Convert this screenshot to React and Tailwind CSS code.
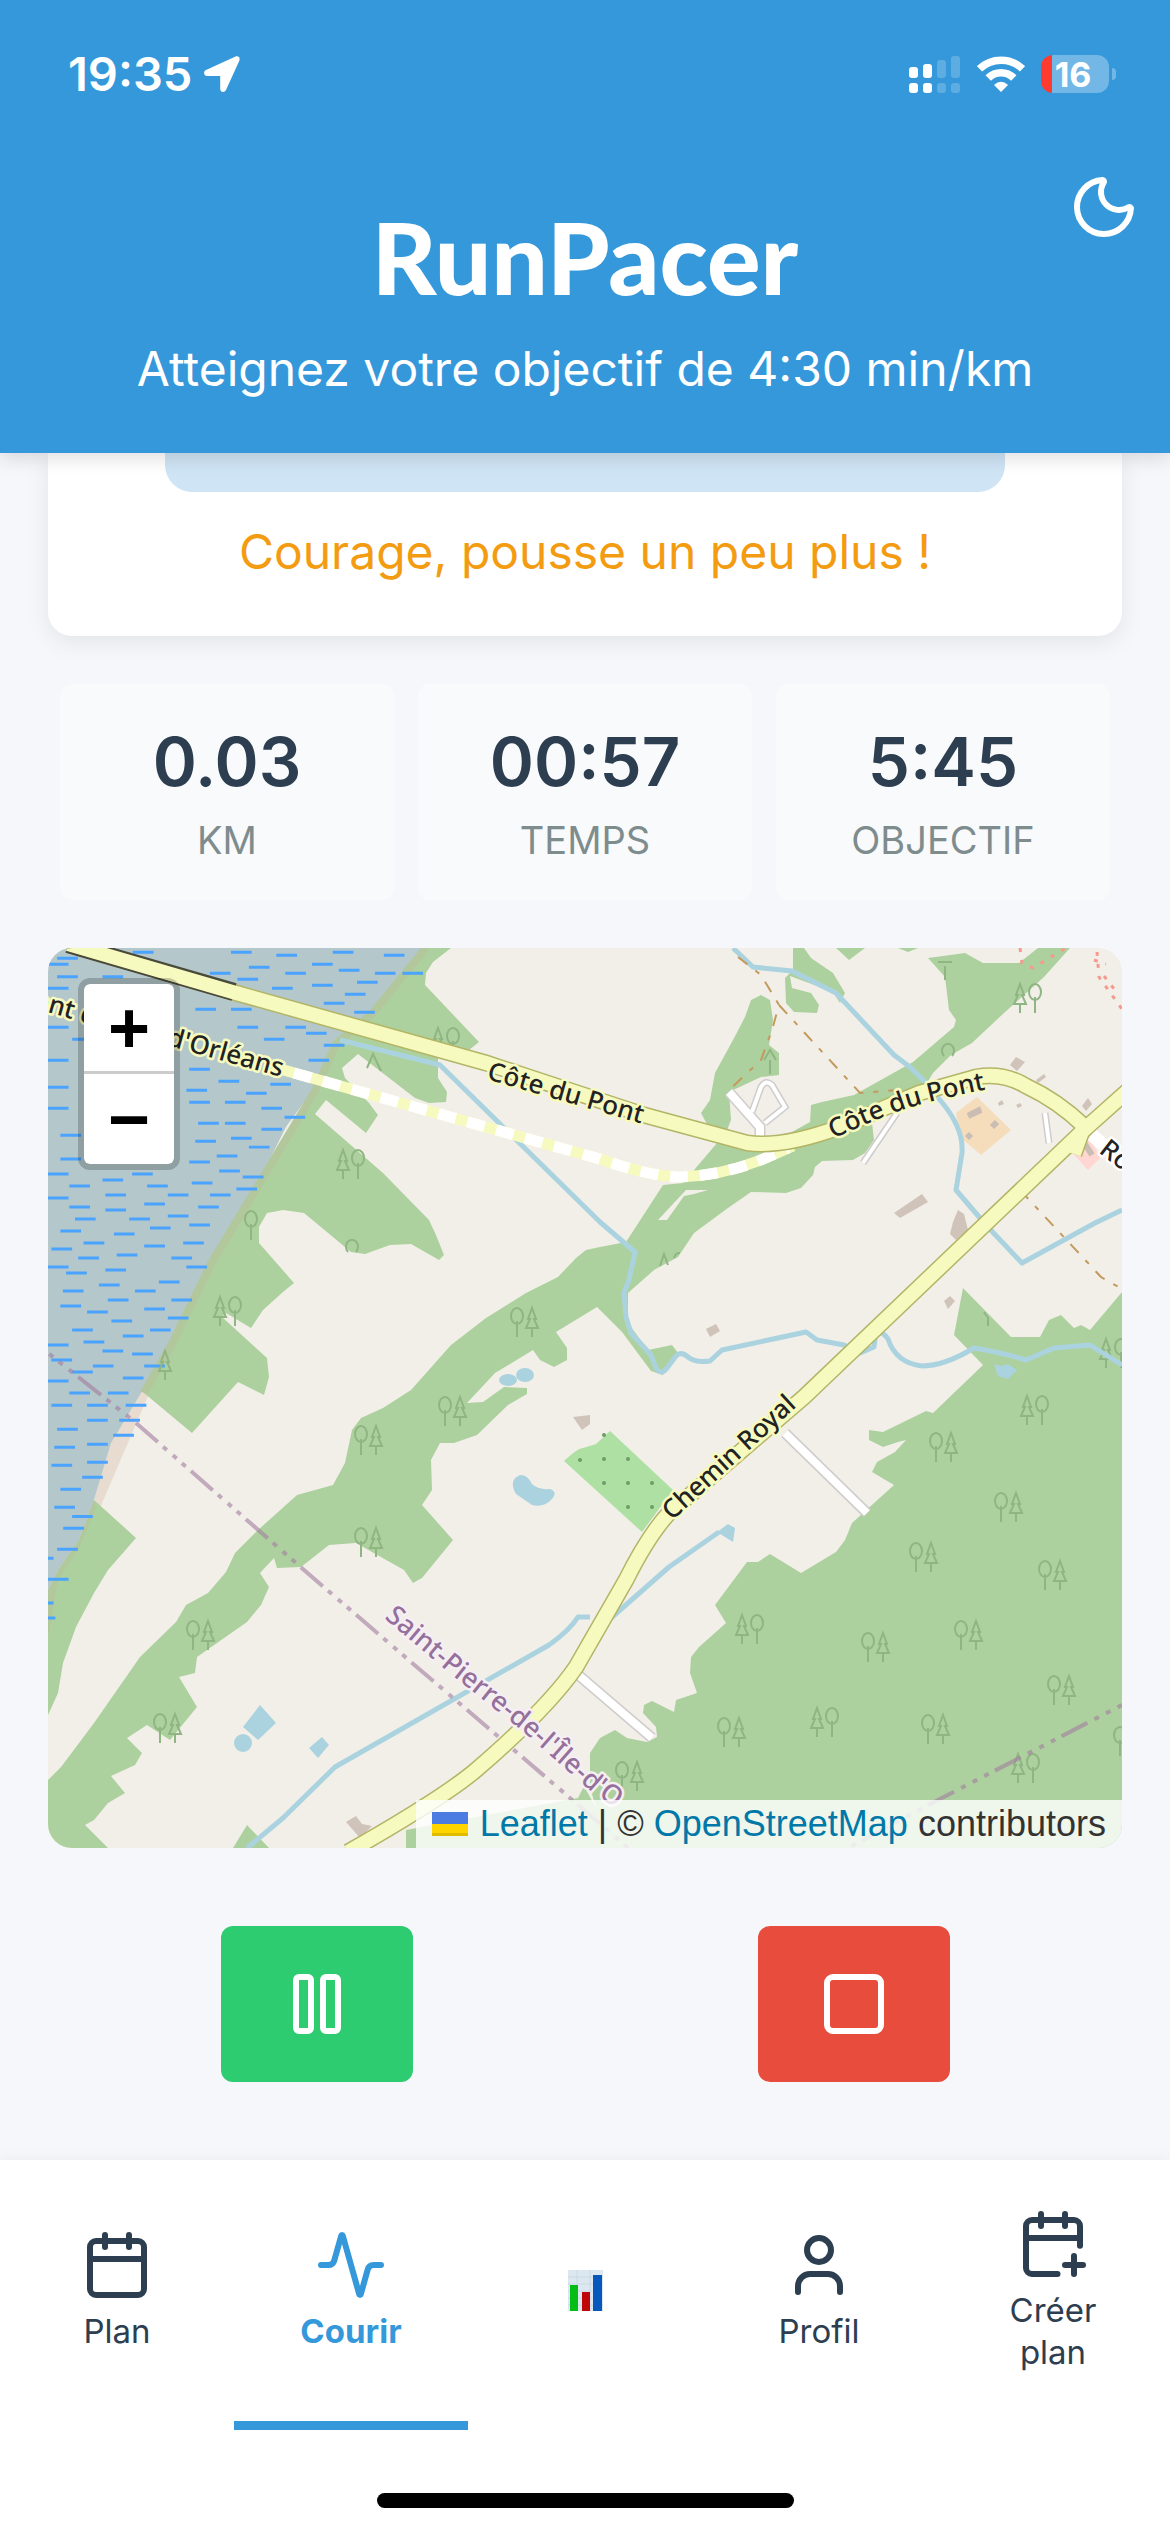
import React from "react";
import { Activity, Calendar, CalendarPlus, Moon, Pause, Square, User } from "lucide-react";

const FOREST = [
  "M378 0H403L385 14L378 25L377 37L431 94L421 102L390 108L390 130L399 144L398 154L381 155L367 150L310 106L294 120L297 130L321 155L330 167L318 185L278 152L267 166L335 225L381 272L388 287L396 307L391 312L363 296L342 297L317 306L303 304L256 265L235 262L219 265L211 279V295L246 335L235 344L215 362L203 380L178 365L174 369L219 410L221 429L216 447L190 434L144 485L90 440L124 392L163 312L213 229L267 139L288 92L324 64Z",
  "M46 552L88 590L60 622L46 645L28 679L15 715L10 745L0 767V642L10 622L31 592Z",
  "M552 299L578 294L615 237L635 235L669 195L653 165L662 152L667 125L685 92L697 69L703 52L713 47L722 52L725 72L721 97L731 105V127L713 129L681 144L683 172L676 190L735 189L762 174L763 157L774 154L806 147L865 114L906 79L908 72L901 62L897 29L880 10L917 5L935 15H971L990 0H1022L996 29L956 65L924 95L903 107L885 125L870 150L824 175L826 192L817 205L805 212L774 213L767 219L765 227L753 240L738 245L703 244L680 260L646 285L630 309L606 322L580 345L580 375L600 402L624 397L630 405L615 427L603 423L574 384L549 359L508 384L519 400V412L506 419L492 412L485 402L447 425L419 455L435 454L456 439L479 440V446L460 457L429 487L406 495H392L383 512L384 542L374 557L405 592L374 630L365 635L356 622L308 595L281 597L253 619L229 620L226 610L212 625L221 639L213 657L199 674L149 709L147 725L131 729L149 759L122 792L99 777L79 790L94 805L87 817L63 828L77 845L60 855L46 872L37 877L60 900H0V832L13 819L46 775L92 709L128 674L138 657L160 645L178 624L187 605L210 582L249 547L285 537L297 515L304 482L313 470L335 460L363 442L403 397L438 370L478 345L510 329L528 310L538 302Z",
  "M745 0H756L763 10L785 25L797 45L792 55L785 44L742 28L744 40L763 45L771 57L769 65L746 64L738 55L737 30L745 22Z",
  "M788 0L801 12L817 0Z",
  "M850 0L860 4L870 0Z",
  "M915 340L963 389H992L1001 372L1013 367L1026 380L1033 377L1042 382L1074 344V900H358V882L530 850L536 838L548 860L542 839V805L552 790L567 782L579 790L599 794L609 789L608 779L595 765L596 757L604 753L626 764L628 752L649 745L642 725L643 709L651 699L678 675L667 657L699 614L710 614L722 606L753 625L788 604L797 592L804 575L846 537L824 524L829 514L847 504L858 492L850 494L835 499L821 492V482L835 484L878 463L885 465L935 417L906 387Z",
  "M199 877L221 900H185Z",
];

const SEA =
  "M0 0H378L324 64L288 92L267 139L238 179L213 229L196 259L163 312L146 345L124 392L90 450L63 495L46 552L31 592L10 622L0 642Z";

const SHORE = "M378 0L324 66L288 96L267 143L213 233L163 316L124 396L96 445";

const STREAMS = [
  "M292 92L392 117L552 274L587 304L581 332L576 345L578 369L583 385L603 407L608 420Q613 428 619 420L628 408Q633 403 640 409T662 413L674 402L758 384L769 392L796 397L812 405L826 399L828 384Q836 384 840 391Q848 415 874 418Q896 418 926 400Q956 405 978 412L1006 400L1042 397L1074 417",
  "M685 0L705 19L744 23L788 45L846 107L862 119L878 135L892 152Q916 180 914 205L908 242L938 277L974 315L1047 275L1074 262",
  "M671 584L621 619L563 670M542 669H530Q522 682 501 697L287 819L235 870L199 900",
];

const MAIN_ROADS = [
  "M20 -4L188 45L438 115L596 167L699 195Q735 200 792 179L871 145L928 129Q955 124 978 138Q1010 153 1036 178L1026 206",
  "M1084 139L1038 180L756 449L621 565Q600 588 578 632L528 719Q500 760 428 822Q395 850 300 904",
];

const WHITE_ROADS = ["M737 485L819 565", "M528 725L604 790", "M681 144L712 179V193", "M704 164L713 139Q718 131 724 137L737 159L717 175", "M849 165L815 215", "M997 165L1001 195"];

const BUILDINGS = [
  "M846 265L874 246L880 254L852 270Z",
  "M905 274L910 262L916 266L920 282L908 292L902 286Z",
  "M896 353L902 348L907 353L900 361Z",
  "M658 381L668 376L672 383L662 389Z",
  "M962 117L968 109L977 114L969 123Z",
  "M988 132L996 126L998 129L990 135Z",
  "M919 165L932 158L934 163L922 169Z",
  "M1034 158L1040 150L1044 156L1038 163Z",
  "M525 469L542 467L542 476L534 482Z",
  "M298 874L308 868L314 876L324 878L312 890Z",
  "M950 155L954 152L956 156L951 158Z",
  "M968 157L972 155L974 158L970 160Z",
];

const ROUND_FIRST = [[881,484],[946,544],[861,594],[990,612],[813,684],[906,672],[999,727],[669,769],[873,766],[567,813],[390,448],[306,477],[306,579],[138,672],[105,765],[462,359],[1065,778]];
const CONE_FIRST = [[972,447],[687,666],[762,759],[963,805],[383,79],[288,201],[165,348],[965,35],[1051,390]];

// Open-water hatch marks on the map's raster grid, as [column, row] pairs.
const WAVES_NORTH = [
  [260,37],[535,37],[820,37],[662,46],[963,46],[48,55],[22,73],[762,73],[585,82],[837,91],[476,100],[938,100],[1015,100],[48,110],[175,110],[687,100],[553,118],[762,136],[888,127],[650,145],[854,163],[795,190],[880,217],[435,208],[535,208],[22,145],[22,262],[90,298],[553,262],[687,262],[627,298],[745,280],[795,316],[22,361],[752,361],[418,388],[500,424],[645,433],[22,442],[577,460],[410,451],[418,487],[518,487],[620,505],[22,505],[685,532],[443,550],[518,550],[620,568],[57,586],[435,604],[535,595],[585,622],[57,658],[495,649],[418,667],[502,694],[568,712],[22,703],[175,721],[258,703],[82,739],[300,739],[425,730],[550,748],[183,766],[358,766],[476,766],[22,775],[82,802],[292,793],[443,802],[183,811],[98,838],[250,838],[358,829],[57,874],[308,865],[418,856],[207,883],[122,910],[292,919],[401,910],[32,928],[215,946],[107,955],[368,955],[22,982],[183,991],[410,982],[73,1000],[333,1027],[165,1036],[64,1054],[266,1054],[190,1081],[368,1081],[57,1099],[292,1108],[132,1117],[358,1135],[200,1144],[308,1171],[90,1171],[232,1189],[122,1207],[22,1216],[175,1234],[258,1243],[32,1261],[148,1279],[292,1279],[90,1297],[232,1315],[22,1324],[82,1360],[190,1360],
];
const WAVES_SOUTH = [[32,46],[132,46],[240,46],[132,91],[222,91],[48,118],[205,136],[132,163],[40,172],[132,217],[32,226],[118,262],[57,298],[40,352],[90,380],[65,415],[48,478],[-20,505],[22,568],[-20,640],[-15,685]];

const toDashes = (marks) => marks.map(([x, y]) => `M${x} ${y}h58`).join("");

function RoundTree({ x }) {
  return <path d={`M${x + 7} 14v16M${x + 7} 1a6 8 0 0 1 0 16a6 8 0 0 1 0-16z`} />;
}

function ConeTree({ x }) {
  return <path d={`M${x + 7} 21v9M${x + 7} 1l4 11h-2l4 9h-12l4-9h-2z`} />;
}

function MapLabel({ fill = "#222", halo = "#f7fabf", children, ...rest }) {
  return (
    <text fontFamily='"Noto Sans", sans-serif' fontSize="26" fontWeight="500" fill={fill} stroke={halo} strokeWidth="5" strokeLinejoin="round" paintOrder="stroke" {...rest}>
      {children}
    </text>
  );
}

function MapCanvas() {
  return (
    <svg viewBox="0 0 1074 900" preserveAspectRatio="xMidYMid slice" className="block h-full w-full" role="img" aria-label="Carte du parcours">
      <defs>
        <path id="cote-est" d="M785 191Q840 165 874 156T960 137" />
        <path id="saint-pierre" d="M336 670L400 724L472 781L538 839L610 892" />
      </defs>
      <rect width="1074" height="900" fill="#f2efe9" />
      <path d="M90 440L100 448L52 560L46 552L63 495Z" fill="#e8dbd0" />
      <g fill="#add19e">
        {FOREST.map((d) => <path key={d} d={d} />)}
      </g>
      <path d="M638 242H660L646 246L636 248L619 272H610Z" fill="#f2efe9" />
      <path d={SEA} fill="#b4c7cb" />
      <path d={SHORE} fill="none" stroke="#b3c79d" strokeWidth="8" />
      <path d="M48 560L31 600L10 632L0 690V642L10 622L31 592L46 552Z" fill="#b3c79d" />
      <g fill="none" stroke="#4aa3ff" strokeWidth="9">
        <path d={toDashes(WAVES_NORTH)} transform="translate(-8 -8) scale(.357 .333)" />
        <path d={toDashes(WAVES_SOUTH)} transform="translate(-8 442) scale(.357 .333)" />
      </g>
      <path d="M562 483L625 542L594 584L516 513Q530 500 535 500L548 496Z" fill="#aee0a3" />
      <g fill="#6d9c66">
        {[[532,512],[556,487],[556,511],[580,511],[556,535],[580,535],[604,535],[580,559],[604,559]].map(([x, y]) => <circle key={`${x}-${y}`} cx={x} cy={y} r="2" />)}
      </g>
      <path d="M929 149L963 182L933 207L912 189L908 165Z" fill="#f5dcba" />
      <path d="M1020 200L1038 187L1053 209L1040 222Z" fill="#ffd6d1" />
      <g fill="#d0c3b9">
        {BUILDINGS.map((d) => <path key={d} d={d} />)}
      </g>
      <g fill="none" stroke="#c9bdb4" strokeWidth="6">
        <path d="M920 168l13-6M944 179l5-5M919 190l4-4M1037 196l7 11" />
      </g>
      <g fill="none" stroke="#8fb583" strokeWidth="2">
        {ROUND_FIRST.map(([x, y]) => (
          <g key={`${x}-${y}`} transform={`translate(${x} ${y})`}><RoundTree x={0} /><ConeTree x={15} /></g>
        ))}
        {CONE_FIRST.map(([x, y]) => (
          <g key={`${x}-${y}`} transform={`translate(${x} ${y})`}><ConeTree x={0} /><RoundTree x={15} /></g>
        ))}
        <g transform="translate(110 402)"><ConeTree x={0} /></g>
        <g transform="translate(196 262)"><RoundTree x={0} /></g>
        <path d="M300 304a6 7 0 1 1 8 0M319 120l6-14l8 17M612 318l4-12l4 11M626 310a6 7 0 0 1 6-5M896 108a6 7 0 1 1 8 0M890 14h14M897 18v14M716 112l6-10l6 10M722 112v14M936 364l4 6v8" />
      </g>
      <g fill="none" stroke="#aad3df" strokeWidth="5" strokeLinejoin="round">
        {STREAMS.map((d) => <path key={d} d={d} />)}
      </g>
      <g fill="#aad3df">
        <path d="M669 584L680 576L687 580L685 594Z" />
        <path d="M212 757L228 775L210 792L195 779Z" />
        <circle cx="195" cy="795" r="9" />
        <path d="M274 789L281 797L270 810L261 800Z" />
        <path d="M472 527Q480 527 484 536Q490 542 502 541Q510 544 504 551Q496 560 484 557L468 546Q460 532 472 527Z" />
        <ellipse cx="460" cy="432" rx="9" ry="6" />
        <ellipse cx="477" cy="427" rx="9" ry="7" />
        <path d="M946 416L954 418L960 416L969 422L960 431L950 428Z" />
      </g>
      <g fill="none" strokeWidth="2" stroke="#c39a5c" strokeDasharray="12 10 5 10">
        <path d="M690 9L713 27L731 57L724 82L713 112L681 142" />
        <path d="M731 57L812 145L849 142" />
        <path d="M972 242L1053 329L1074 341" />
      </g>
      <g fill="none" stroke="#f79a8e" strokeWidth="3" strokeDasharray="4 8">
        <path d="M972 0L974 15L985 20L1018 0M1049 4L1051 29L1076 64M1046 12L1058 16M1056 28L1070 46" />
      </g>
      <g fill="none" stroke="#a17ba0" strokeOpacity=".6" strokeWidth="4">
        <path d="M88 475L256 622L363 714L528 855L580 900" strokeDasharray="29 7 5 8 5 7 5 7" />
        <path d="M82 470L0 405" strokeDasharray="5 8 5 7 5 7 29 7" />
        <path d="M1074 757L890 852L800 900" strokeDasharray="5 8 5 8 5 8 29 7" />
      </g>
      <g fill="none" stroke="#cfcccc">
        {WHITE_ROADS.map((d, i) => <path key={d} d={d} strokeWidth={i < 3 ? 11 : 7} />)}
      </g>
      <g fill="none" stroke="#fff">
        {WHITE_ROADS.map((d, i) => <path key={d} d={d} strokeWidth={i < 3 ? 8 : 4} />)}
      </g>
      <path d="M1036 180L1080 218" stroke="#fff" strokeWidth="13" />
      <path d="M225 119L420 174L552 211Q600 228 631 229Q672 228 713 212L745 198" fill="none" stroke="#f7fabf" strokeWidth="11" />
      <path d="M246 125L420 174L552 211Q600 228 631 229Q672 228 713 212L740 200" fill="none" stroke="#fff" strokeWidth="11" strokeDasharray="18 12" />
      <g fill="none" stroke="#b3b566" strokeWidth="17">
        {MAIN_ROADS.map((d) => <path key={d} d={d} />)}
      </g>
      <path d="M20 -4L186 44" stroke="#4a4a3a" strokeWidth="18" />
      <g fill="none" stroke="#f7fabf" strokeWidth="14">
        {MAIN_ROADS.map((d) => <path key={d} d={d} />)}
      </g>
      <MapLabel x="438" y="131" transform="rotate(16 438 131)">Côte du Pont</MapLabel>
      <MapLabel><textPath href="#cote-est">Côte du Pont</textPath></MapLabel>
      <MapLabel x="624" y="573" transform="rotate(-42.5 624 573)">Chemin Royal</MapLabel>
      <MapLabel x="233" y="129" textAnchor="end" transform="rotate(15.5 233 129)">Pont de l'Île-d'Orléans</MapLabel>
      <MapLabel halo="#fff" x="1050" y="204" transform="rotate(38 1050 204)">Route</MapLabel>
      <MapLabel fill="#94709a" halo="#f5eef3" fontSize="27"><textPath href="#saint-pierre">Saint-Pierre-de-l'Île-d'O</textPath></MapLabel>
    </svg>
  );
}

function MapPanel() {
  return (
    <section className="relative h-[900px] overflow-hidden rounded-3xl font-['Liberation_Sans',sans-serif]">
      <MapCanvas />
      <div className="absolute top-[30px] left-[30px] flex flex-col overflow-hidden rounded-xl border-6 border-black/20 bg-clip-padding text-7xl leading-none font-bold text-black">
        <button type="button" aria-label="Zoom avant" className="flex h-[90px] w-[90px] items-center justify-center rounded-t-md border-b-3 border-[#ccc] bg-white"><span>+</span></button>
        <button type="button" aria-label="Zoom arrière" className="flex h-[90px] w-[90px] items-center justify-center rounded-b-md bg-white"><span>−</span></button>
      </div>
      <div className="absolute right-0 bottom-0 flex h-12 items-center gap-3 bg-white/80 px-4 text-4xl text-[#333]">
        <svg viewBox="0 0 12 8" className="h-6 w-9" aria-hidden="true">
          <path fill="#4c7be1" d="M0 0h12v4H0z" />
          <path fill="#ffd500" d="M0 4h12v3H0z" />
          <path fill="#e0bc00" d="M0 7h12v1H0z" />
        </svg>
        <p className="whitespace-nowrap"><a href="#leaflet" className="text-[#0078a8]">Leaflet</a> | © <a href="#openstreetmap" className="text-[#0078a8]">OpenStreetMap</a> contributors</p>
      </div>
    </section>
  );
}

function StatusBar() {
  return (
    <div className="flex h-[148px] items-center justify-between pr-[54px] pl-[68px]">
      <div className="flex items-center gap-3">
        <span className="text-[47px] font-semibold">19:35</span>
        <svg viewBox="0 0 36 36" className="h-9 w-9" fill="currentColor" aria-hidden="true">
          <path d="M2 14L31 .8C34.500-.6 36.600 1.500 35.200 5L22 34C20.600 37 16.300 36.400 16.200 33V20H3C-.4 20-1 15.400 2 14Z" />
        </svg>
      </div>
      <div className="flex items-center">
        <svg viewBox="0 0 52 38" className="h-[38px] w-[52px]" fill="currentColor" aria-hidden="true">
          <rect x="0" y="12" width="9" height="11" rx="3" /><rect x="14" y="9" width="9" height="14" rx="3" />
          <rect x="0" y="28" width="9" height="10" rx="3" /><rect x="14" y="28" width="9" height="10" rx="3" />
          <g opacity=".2"><rect x="28" y="5" width="9" height="18" rx="3" /><rect x="42" y="1" width="9" height="22" rx="3" /><rect x="28" y="28" width="9" height="10" rx="3" /><rect x="42" y="28" width="9" height="10" rx="3" /></g>
        </svg>
        <svg viewBox="0 0 48 36" className="ml-4 h-9 w-12" aria-hidden="true">
          <g fill="none" stroke="#fff" strokeWidth="7.500"><path d="M2.500 12.800A31 31 0 0 1 45.500 12.800" /><path d="M11.200 22A18 18 0 0 1 36.800 22" /></g>
          <path d="M24 36L17 29Q24 22.500 31 29Z" fill="#fff" />
        </svg>
        <div className="ml-4 flex h-[38px] w-[68px] items-center justify-center overflow-hidden rounded-xl bg-linear-to-r from-[#ff3b30] from-16% to-[#72b7e6] to-16% pr-1">
          <span className="text-[34px] font-bold">16</span>
        </div>
        <div className="ml-[3px] h-3 w-1 rounded-r-full bg-white/30" />
      </div>
    </div>
  );
}

function ChartIcon() {
  return (
    <svg viewBox="0 0 35 41" className="h-[41px] w-[35px]" aria-hidden="true">
      <rect width="35" height="41" fill="#dde7ef" />
      <path d="M0 7H35M0 14H35M0 21H35M0 28H35M0 35H35M9 0V41M22 0V41" stroke="#cbd9e4" strokeWidth="1" />
      <rect x="2" y="15" width="8" height="26" fill="#06bd16" />
      <rect x="14" y="22" width="8" height="19" fill="#be0508" />
      <rect x="25" y="5" width="9" height="36" fill="#0758bd" />
    </svg>
  );
}

const STATS = [["0.03", "KM"], ["00:57", "TEMPS"], ["5:45", "OBJECTIF"]];

const TABS = [
  { label: "Plan", Icon: Calendar },
  { label: "Courir", Icon: Activity, active: true },
  { label: "" },
  { label: "Profil", Icon: User },
  { label: "Créer plan", Icon: CalendarPlus },
];

export default function App() {
  return (
    <div className="flex min-h-screen flex-col bg-[#f5f7fb] font-[Inter,sans-serif] text-[#2c3e50]">
      <header className="relative z-10 bg-[#3498db] pb-9 text-center text-white shadow-[0_6px_18px_rgba(0,0,0,0.12)]">
        <StatusBar />
        <button type="button" aria-label="Mode sombre" className="absolute top-[171px] right-[30px]">
          <Moon size={72} />
        </button>
        <h1 className="mt-12 font-[Lato,sans-serif] text-[100px] leading-[120px] font-black">RunPacer</h1>
        <p className="mt-[5px] text-5xl leading-[96px]">Atteignez votre objectif de 4:30 min/km</p>
      </header>

      <main className="flex flex-1 flex-col px-12">
        <section className="rounded-b-3xl bg-white pb-12 shadow-[0_6px_24px_rgba(0,0,0,0.08)]">
          <div className="mx-[117px] h-[39px] rounded-b-[27px] bg-[#cfe4f5]" />
          <p className="pt-6 text-center text-5xl leading-[72px] text-[#f39c12]">Courage, pousse un peu plus !</p>
        </section>

        <dl className="mt-12 grid grid-cols-3 gap-6 px-3">
          {STATS.map(([value, label]) => (
            <div key={label} className="flex h-[216px] flex-col-reverse items-center justify-center rounded-xl bg-[#f8fafc] pb-1">
              <dt className="text-[38px] leading-[56px] text-[#7f8c8d]">{label}</dt>
              <dd className="text-[67px] leading-[100px] font-semibold">{value}</dd>
            </div>
          ))}
        </dl>

        <div className="mt-12">
          <MapPanel />
        </div>

        <div className="mt-[78px] mb-[78px] flex justify-around text-white">
          <button type="button" aria-label="Pause" className="flex h-[156px] w-48 items-center justify-center rounded-xl bg-[#2ecc71]"><Pause size={72} /></button>
          <button type="button" aria-label="Arrêter" className="flex h-[156px] w-48 items-center justify-center rounded-xl bg-[#e74c3c]"><Square size={72} /></button>
        </div>
      </main>

      <nav className="bg-white shadow-[0_-3px_12px_rgba(0,0,0,0.04)]">
        <div className="grid grid-cols-5">
          {TABS.map(({ label, Icon, active }) => (
            <button
              key={label}
              type="button"
              aria-label={label || "Statistiques"}
              aria-current={active ? "page" : undefined}
              className={
                active
                  ? "flex h-[270px] flex-col items-center justify-center gap-[9px] border-b-9 border-[#3498db] px-12 text-[33px] leading-[42px] font-bold text-[#3498db]"
                  : "flex h-[270px] flex-col items-center justify-center gap-[9px] border-b-9 border-transparent px-12 text-[33px] leading-[42px]"
              }
            >
              {Icon ? <Icon size={72} className="shrink-0" /> : <ChartIcon />}
              {label && <span className="max-w-[120px]">{label}</span>}
            </button>
          ))}
        </div>
        <div className="flex h-[102px] items-end justify-center pb-6">
          <div className="h-[15px] w-[417px] rounded-full bg-black" />
        </div>
      </nav>
    </div>
  );
}
